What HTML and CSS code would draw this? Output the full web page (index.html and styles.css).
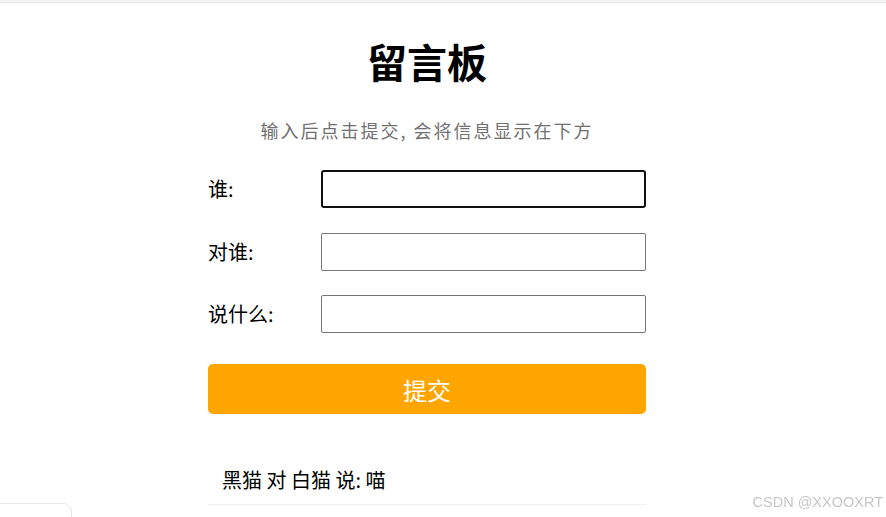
FILE: index.html
```html
<!DOCTYPE html>
<html lang="zh-CN">
<head>
<meta charset="utf-8">
<title>留言板</title>
<link rel="stylesheet" href="styles.css">
</head>
<body>
<div class="topbar"></div>
<div class="container">
  <h1 class="title">留言板</h1>
  <p class="subtitle">输入后点击提交, 会将信息显示在下方</p>
  <div class="row">
    <label class="label">谁:</label>
    <input class="field focused" type="text">
  </div>
  <div class="row">
    <label class="label">对谁:</label>
    <input class="field" type="text">
  </div>
  <div class="row">
    <label class="label">说什么:</label>
    <input class="field" type="text">
  </div>
  <button class="submit">提交</button>
  <div class="message">黑猫 对 白猫 说: 喵</div>
</div>
<div class="corner"></div>
<div class="watermark">CSDN @XXOOXRT</div>
</body>
</html>
```
FILE: styles.css
```css
html, body {
  margin: 0;
  padding: 0;
  background: #fff;
  height: 100%;
  overflow: hidden;
}
body {
  font-family: "Noto Sans CJK SC", "Noto Sans", sans-serif;
  color: #000;
}
.topbar {
  height: 3px;
  background: #f2f2f2;
  border-bottom: 1px solid #e8e8e8;
  box-sizing: border-box;
}
.container {
  width: 438px;
  margin-left: 208px;
}
.title {
  margin: 34px 0 0;
  font-size: 40px;
  line-height: 48px;
  font-weight: 700;
  text-align: center;
}
.subtitle {
  margin: 31px 0 0;
  font-size: 18px;
  line-height: 28px;
  color: #707070;
  text-align: center;
  letter-spacing: 2px;
}
.row {
  display: flex;
  align-items: center;
  height: 38px;
  margin-top: 24.5px;
}
.row:first-of-type {
  margin-top: 26px;
}
.label {
  width: 113px;
  font-size: 20px;
  line-height: 28px;
}
.field {
  width: 325px;
  height: 38px;
  box-sizing: border-box;
  border: 1px solid #767676;
  border-radius: 2px;
  padding: 0 4px;
  margin: 0;
  font-size: 16px;
  background: #fff;
}
.field.focused {
  border: 2px solid #101010;
  border-radius: 3px;
  outline: none;
}
.submit {
  display: block;
  width: 438px;
  height: 50px;
  margin-top: 31px;
  border: none;
  border-radius: 5px;
  background: #ffa500;
  color: #fff;
  font-family: "Noto Sans CJK SC", sans-serif;
  font-size: 24px;
  padding: 0;
}
.message {
  margin-top: 42px;
  height: 48px;
  line-height: 48px;
  padding-left: 14px;
  font-size: 20px;
  border-bottom: 1px solid #eee;
}
.corner {
  position: fixed;
  left: -10px;
  bottom: -20px;
  width: 80px;
  height: 32px;
  border: 1px solid #e6e6e6;
  border-radius: 8px;
  background: #fff;
}
.watermark {
  position: fixed;
  right: 3px;
  bottom: 7px;
  font-family: "Liberation Sans", Arial, sans-serif;
  font-size: 14.5px;
  color: #c6c6c6;
}
```
